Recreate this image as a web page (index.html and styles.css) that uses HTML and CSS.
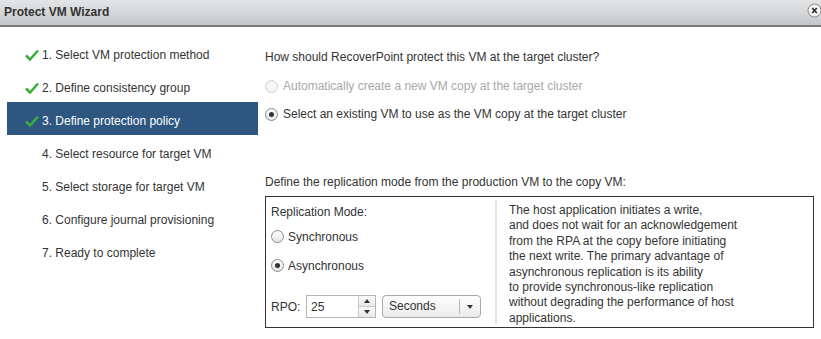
FILE: index.html
```html
<!DOCTYPE html>
<html lang="en">

<head>
    <meta charset="UTF-8">
    <title>Protect VM Wizard</title>
    <link rel="stylesheet" href="styles.css">
</head>

<body>
    <div class="titlebar">
        <span class="title">Protect VM Wizard</span>
        <span class="close-btn">
            <svg width="15" height="15" viewBox="0 0 15 15">
                <circle cx="7.5" cy="7.5" r="6.5" fill="#f4f4f4" stroke="#8a8a8a" stroke-width="1"/>
                <path d="M5.2 5 L9.8 10 M9.8 5 L5.2 10" stroke="#333" stroke-width="1.8"/>
            </svg>
        </span>
    </div>

    <div class="wizard">
        <ul class="steps">
            <li class="done"><span class="check"><svg width="14" height="12" viewBox="0 0 14 12"><path d="M1 6.5 L5 10.5 L13 1.5" fill="none" stroke="#3cae3c" stroke-width="2.6"/></svg></span>1. Select VM protection method</li>
            <li class="done"><span class="check"><svg width="14" height="12" viewBox="0 0 14 12"><path d="M1 6.5 L5 10.5 L13 1.5" fill="none" stroke="#3cae3c" stroke-width="2.6"/></svg></span>2. Define consistency group</li>
            <li class="done active"><span class="check"><svg width="14" height="12" viewBox="0 0 14 12"><path d="M1 6.5 L5 10.5 L13 1.5" fill="none" stroke="#3cae3c" stroke-width="2.6"/></svg></span>3. Define protection policy</li>
            <li>4. Select resource for target VM</li>
            <li>5. Select storage for target VM</li>
            <li>6. Configure journal provisioning</li>
            <li>7. Ready to complete</li>
        </ul>

        <div class="content">
            <p class="question">How should RecoverPoint protect this VM at the target cluster?</p>
            <div class="option disabled"><span class="radio"></span>Automatically create a new VM copy at the target cluster</div>
            <div class="option"><span class="radio checked"></span>Select an existing VM to use as the VM copy at the target cluster</div>

            <p class="mode-label">Define the replication mode from the production VM to the copy VM:</p>
            <div class="mode-box">
                <div class="mode-left">
                    <div class="mode-title">Replication Mode:</div>
                    <div class="option small"><span class="radio"></span>Synchronous</div>
                    <div class="option small"><span class="radio checked"></span>Asynchronous</div>
                    <div class="rpo-row">
                        <span class="rpo-label">RPO:</span>
                        <div class="spinner">
                            <span class="spin-value">25</span>
                            <span class="spin-btns">
                                <span class="spin-up"></span>
                                <span class="spin-down"></span>
                            </span>
                        </div>
                        <div class="dropdown">
                            <span class="drop-value">Seconds</span>
                            <span class="drop-arrow"></span>
                        </div>
                    </div>
                </div>
                <div class="mode-right">
                    The host application initiates a write,<br>
                    and does not wait for an acknowledgement<br>
                    from the RPA at the copy before initiating<br>
                    the next write. The primary advantage of<br>
                    asynchronous replication is its ability<br>
                    to provide synchronous-like replication<br>
                    without degrading the performance of host<br>
                    applications.
                </div>
            </div>
        </div>
    </div>
</body>

</html>
```

FILE: styles.css
```css
* {
    box-sizing: border-box;
}

body {
    margin: 0;
    font-family: "Liberation Sans", Arial, sans-serif;
    font-size: 12px;
    color: #333;
    background: #fff;
    overflow: hidden;
}

.titlebar {
    height: 27px;
    display: flex;
    align-items: center;
    justify-content: space-between;
    padding: 0 0 2px 4px;
    background: linear-gradient(#e4e5e7, #c6c7c9);
    border-bottom: 2px solid #7b7b7b;
}

.title {
    font-weight: bold;
    font-size: 12px;
    color: #333;
}

.close-btn {
    display: flex;
    margin: 0 -1px 3px 0;
}

.wizard {
    display: flex;
}

.steps {
    list-style: none;
    margin: 0;
    padding: 9px 0 0 7px;
    width: 258px;
    flex-shrink: 0;
}

.steps li {
    height: 33px;
    display: flex;
    align-items: center;
    padding: 4px 0 0 35px;
    color: #333;
}

.steps li.done {
    padding-left: 18px;
}

.steps li.active {
    background: #2d5680;
    color: #fff;
}

.check {
    display: flex;
    width: 17px;
}

.content {
    padding: 23px 0 0 7px;
    flex: 1;
}

.question {
    margin: 0 0 8px;
    line-height: 14px;
}

.option {
    display: flex;
    align-items: center;
    height: 28px;
    gap: 5px;
}

.option.disabled {
    color: #a8a8a8;
}

.radio {
    width: 13px;
    height: 13px;
    border-radius: 50%;
    border: 1px solid #8c8c8c;
    background: linear-gradient(#fdfdfd, #e6e6e6);
    display: flex;
    align-items: center;
    justify-content: center;
}

.disabled .radio {
    border-color: #d0d0d0;
    background: #f6f6f6;
}

.radio.checked::after {
    content: "";
    width: 5px;
    height: 5px;
    border-radius: 50%;
    background: #333;
}

.mode-label {
    margin: 47px 0 7px;
    line-height: 14px;
}

.mode-box {
    width: 549px;
    height: 132px;
    border: 1px solid #333;
    display: flex;
}

.mode-left {
    width: 229px;
    padding: 8px 0 0 5px;
    flex-shrink: 0;
}

.mode-title {
    line-height: 14px;
    margin-bottom: 3px;
}

.option.small {
    height: 29px;
    gap: 4px;
}

.rpo-row {
    display: flex;
    align-items: center;
    margin-top: 15px;
}

.rpo-label {
    width: 35px;
}

.spinner {
    width: 70px;
    height: 23px;
    border: 1px solid #b5b5b5;
    display: flex;
    align-items: center;
    justify-content: space-between;
    padding-left: 4px;
    background: #fff;
}

.spin-btns {
    width: 17px;
    height: 21px;
    display: flex;
    flex-direction: column;
    border-left: 1px solid #c8c8c8;
}

.spin-up,
.spin-down {
    flex: 1;
    display: flex;
    align-items: center;
    justify-content: center;
    background: linear-gradient(#fbfbfb, #e8e8e8);
}

.spin-up {
    border-bottom: 1px solid #c8c8c8;
}

.spin-up::after {
    content: "";
    border-left: 3px solid transparent;
    border-right: 3px solid transparent;
    border-bottom: 4px solid #333;
}

.spin-down::after {
    content: "";
    border-left: 3px solid transparent;
    border-right: 3px solid transparent;
    border-top: 4px solid #333;
}

.dropdown {
    margin-left: 6px;
    width: 99px;
    height: 23px;
    border: 1px solid #a8a8a8;
    border-radius: 4px;
    background: linear-gradient(#fdfdfd, #ececec);
    display: flex;
    align-items: center;
}

.drop-value {
    width: 77px;
    padding-left: 6px;
    border-right: 1px solid #b8b8b8;
    line-height: 15px;
}

.drop-arrow {
    flex: 1;
    display: flex;
    justify-content: center;
}

.drop-arrow::after {
    content: "";
    border-left: 3px solid transparent;
    border-right: 3px solid transparent;
    border-top: 4px solid #333;
}

.mode-right {
    margin: 3px 0;
    border-left: 2px solid #e2e2e2;
    padding: 3px 0 0 12px;
    line-height: 15.4px;
    flex: 1;
}
```
